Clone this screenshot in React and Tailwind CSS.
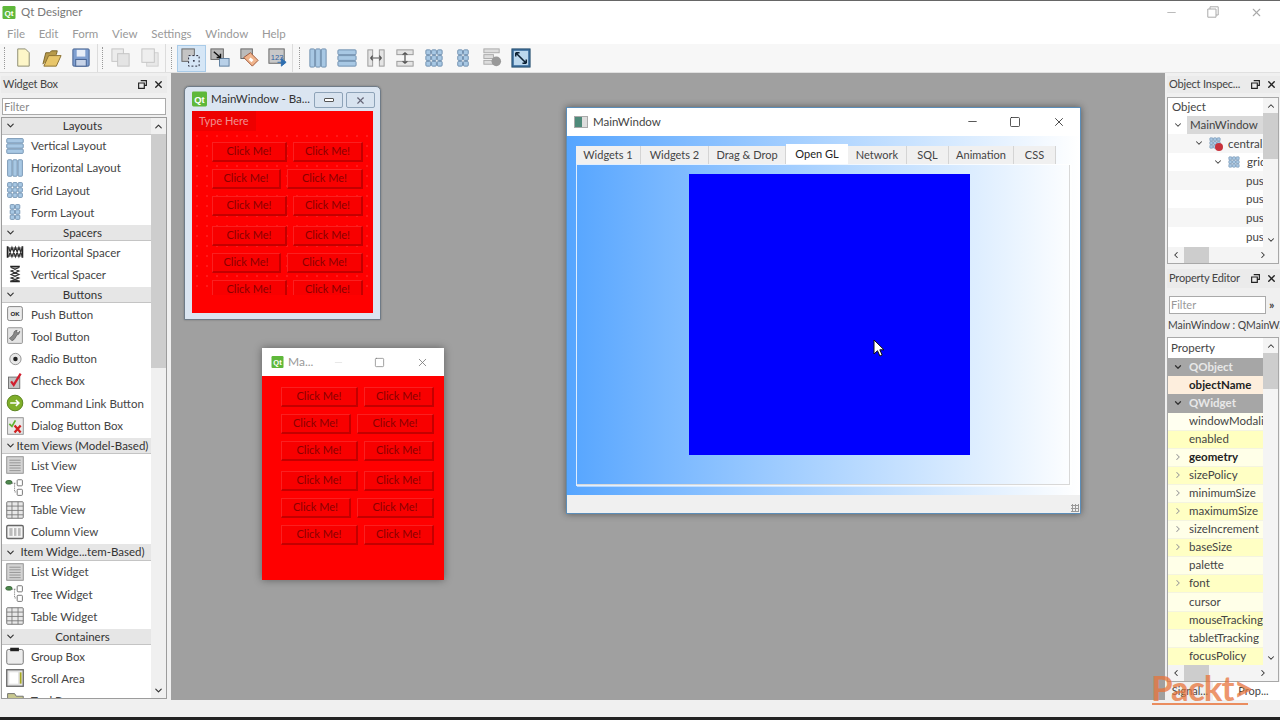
import React from "react";
import { ChevronDown, ChevronUp, ChevronLeft, ChevronRight, X, Minus, Square } from "lucide-react";

const FONT = { fontFamily: 'Lato, "Noto Sans", sans-serif' };

function QtLogo({ className = "w-4 h-4" }) {
  return (
    <svg viewBox="0 0 16 16" className={className}>
      <rect width="16" height="16" rx="1.5" fill="#5fb83a" />
      <text x="8" y="12" fontSize="10" fontWeight="700" textAnchor="middle" fill="#fff" fontFamily="Liberation Sans">Qt</text>
    </svg>
  );
}

// small drawings for the toolbar and the widget list
function Glyph({ name, className = "w-[22px] h-[22px]" }) {
  const blue = "#a8c8e4";
  const edge = "#6f8fae";
  let body = null;
  switch (name) {
    case "new":
      body = <path d="M6 2h8l4 4v14H6z" fill="#fdf6c8" stroke="#8a8a70" strokeWidth="1" />;
      break;
    case "open":
      body = (
        <>
          <path d="M2 18 5 6h4l2-2h6l-1 4" fill="#b79a4a" stroke="#7a6428" />
          <path d="M3 20 8 9h13l-5 11z" fill="#e8c66a" stroke="#8a7030" />
        </>
      );
      break;
    case "save":
      body = (
        <>
          <rect x="3" y="2" width="17" height="18" rx="1" fill="#7f9fd0" stroke="#44608f" />
          <rect x="7" y="3" width="9" height="7" fill="#e8eef8" />
          <rect x="6" y="13" width="11" height="7" fill="#c8d4e8" stroke="#44608f" />
        </>
      );
      break;
    case "copy":
      body = (
        <>
          <rect x="2" y="2" width="12" height="13" fill="#ececec" stroke="#c4c4c4" />
          <rect x="8" y="7" width="12" height="13" fill="#e4e4e4" stroke="#c4c4c4" />
        </>
      );
      break;
    case "paste":
      body = (
        <>
          <rect x="8" y="6" width="12" height="14" fill="#e8e8e8" stroke="#d0d0d0" />
          <rect x="3" y="2" width="13" height="14" fill="#eeeeee" stroke="#c4c4c4" />
        </>
      );
      break;
    case "select":
      body = (
        <>
          <rect x="2" y="2" width="13" height="13" fill="#c4c4c4" stroke="#666" />
          <rect x="9" y="9" width="11" height="11" fill="#d6e6f6" stroke="#223" strokeDasharray="2 2" />
          <circle cx="14.5" cy="14.5" r="1" fill="#223" />
        </>
      );
      break;
    case "signal":
      body = (
        <>
          <rect x="2" y="2" width="13" height="11" fill="#b8b8b8" stroke="#666" />
          <rect x="11" y="12" width="10" height="8" fill="#b8d0e8" stroke="#5f7f9f" />
          <path d="M5 5l7 6M12 7v4H8" stroke="#111" strokeWidth="1.5" fill="none" />
        </>
      );
      break;
    case "buddy":
      body = (
        <>
          <rect x="3" y="2" width="12" height="10" fill="#bbb" stroke="#666" />
          <path d="M6 11 13 6l8 8-6 6z" fill="#f0b48c" stroke="#a0583a" />
          <rect x="12" y="12" width="4" height="3" fill="#fff" transform="rotate(40 14 13)" />
        </>
      );
      break;
    case "tab":
      body = (
        <>
          <rect x="2" y="2" width="16" height="15" fill="#c8c8c8" stroke="#666" />
          <text x="4" y="14" fontSize="8" fill="#2f5fa0" fontFamily="Liberation Sans">123</text>
          <path d="M11 16h7M15 12l5 4-5 4z" stroke="#2f6fb0" fill="#2f6fb0" />
        </>
      );
      break;
    case "hlayout":
      body = (
        <>
          <rect x="3" y="2" width="5" height="19" rx="1" fill={blue} stroke={edge} />
          <rect x="9" y="2" width="5" height="19" rx="1" fill={blue} stroke={edge} />
          <rect x="15" y="2" width="5" height="19" rx="1" fill={blue} stroke={edge} />
        </>
      );
      break;
    case "vlayout":
      body = (
        <>
          <rect x="2" y="3" width="19" height="5" rx="1" fill={blue} stroke={edge} />
          <rect x="2" y="9" width="19" height="5" rx="1" fill={blue} stroke={edge} />
          <rect x="2" y="15" width="19" height="5" rx="1" fill={blue} stroke={edge} />
        </>
      );
      break;
    case "hsplit":
      body = (
        <>
          <rect x="3" y="3" width="5" height="17" fill="#e4e4e4" stroke="#999" />
          <rect x="15" y="3" width="5" height="17" fill="#e4e4e4" stroke="#999" />
          <path d="M7 11.5h9M8 9l-2 2.5L8 14M15 9l2 2.5-2 2.5" stroke="#555" strokeWidth="1.3" fill="none" />
        </>
      );
      break;
    case "vsplit":
      body = (
        <>
          <rect x="3" y="3" width="17" height="5" fill="#e4e4e4" stroke="#999" />
          <rect x="3" y="15" width="17" height="5" fill="#e4e4e4" stroke="#999" />
          <path d="M11.5 7v9M9 8l2.5-2L14 8M9 15l2.5 2 2.5-2" stroke="#555" strokeWidth="1.3" fill="none" />
        </>
      );
      break;
    case "grid":
      body = (
        <>
          {[3, 9, 15].map((y) =>
            [3, 9, 15].map((x) => <rect key={x + "-" + y} x={x} y={y} width="5" height="5" rx="1" fill={blue} stroke={edge} />)
          )}
        </>
      );
      break;
    case "form":
      body = (
        <>
          {[3, 9, 15].map((y) =>
            [6, 12].map((x) => <rect key={x + "-" + y} x={x} y={y} width="5" height="5" rx="1" fill={blue} stroke={edge} />)
          )}
        </>
      );
      break;
    case "breaklayout":
      body = (
        <>
          <rect x="3" y="2" width="16" height="4" fill="#ddd" stroke="#aaa" />
          <rect x="3" y="8" width="10" height="4" fill="#ddd" stroke="#aaa" />
          <rect x="3" y="14" width="9" height="4" fill="#ddd" stroke="#aaa" />
          <circle cx="16" cy="15" r="5" fill="#999" />
        </>
      );
      break;
    case "adjust":
      body = (
        <>
          <rect x="2" y="2" width="19" height="19" fill="#3d6f9f" stroke="#27506f" />
          <rect x="4" y="4" width="15" height="15" fill="#bcd8ee" />
          <path d="M6 6l11 11M6 6h4M6 6v4M17 17h-4M17 17v-4" stroke="#0d2235" strokeWidth="1.6" fill="none" />
        </>
      );
      break;
    case "hspacer":
      body = (
        <>
          <path d="M3 5v13M20 5v13" stroke="#222" strokeWidth="2" />
          <path d="M4 6l4 11 4-11 4 11 4-11M4 17l4-11 4 11 4-11 4 11" stroke="#333" strokeWidth="1.4" fill="#999" />
        </>
      );
      break;
    case "vspacer":
      body = (
        <>
          <path d="M6 3h11M6 20h11" stroke="#222" strokeWidth="2" />
          <path d="M7 4l9 4-9 4 9 4-9 4M16 4 7 8l9 4-9 4 9 4" stroke="#333" strokeWidth="1.4" fill="none" />
        </>
      );
      break;
    case "ok":
      body = (
        <>
          <rect x="3" y="3" width="17" height="16" rx="2" fill="#ececec" stroke="#777" />
          <text x="11.5" y="14" fontSize="7" fontWeight="700" textAnchor="middle" fill="#222" fontFamily="Liberation Sans">OK</text>
        </>
      );
      break;
    case "tool":
      body = (
        <>
          <rect x="3" y="2" width="17" height="18" rx="1" fill="#e4e4e4" stroke="#888" />
          <path d="M8 17c3-1 4-4 6-7 2 0 3-2 3-4l-2 2-2-1 1-2c-3 0-4 2-4 4-1 2-3 4-5 5z" fill="#888" stroke="#444" strokeWidth=".6" />
        </>
      );
      break;
    case "radio":
      body = (
        <>
          <circle cx="12" cy="11.5" r="6.5" fill="#e8e8e8" stroke="#888" />
          <circle cx="12" cy="11.5" r="2.6" fill="#222" />
        </>
      );
      break;
    case "check":
      body = (
        <>
          <rect x="4" y="7" width="13" height="13" fill="#c4c4c4" stroke="#666" />
          <path d="M7 12l3 4 8-13" stroke="#d01f2f" strokeWidth="2.6" fill="none" />
        </>
      );
      break;
    case "command":
      body = (
        <>
          <circle cx="11.5" cy="11.5" r="9" fill="#7fae2a" stroke="#4f7a10" />
          <path d="M6 11.5h10M12.5 8l3.5 3.5-3.5 3.5" stroke="#fff" strokeWidth="1.8" fill="none" />
        </>
      );
      break;
    case "dialog":
      body = (
        <>
          <rect x="3" y="2" width="18" height="19" fill="#e8e8e8" stroke="#888" />
          <path d="M5 9l3 3 4-7" stroke="#60b030" strokeWidth="2" fill="none" />
          <path d="M11 11l7 8M18 11l-7 8" stroke="#d02020" strokeWidth="2.6" />
        </>
      );
      break;
    case "list":
      body = (
        <>
          <rect x="2" y="2" width="19" height="19" fill="#d4d4d4" stroke="#888" />
          <path d="M5 6h13M5 9h13M5 12h13M5 15h13M5 18h13" stroke="#8c8c8c" />
        </>
      );
      break;
    case "tree":
      body = (
        <>
          <rect x="1" y="3" width="7" height="4" rx="2" fill="#4f8a4f" stroke="#2f5f2f" />
          <path d="M8 6h5M11 6v10h2" stroke="#777" strokeDasharray="1.5 1" fill="none" />
          <rect x="14" y="2" width="6" height="7" rx="1" fill="#fff" stroke="#666" />
          <rect x="14" y="13" width="6" height="7" rx="1" fill="#fff" stroke="#666" />
        </>
      );
      break;
    case "table":
      body = (
        <>
          <rect x="2" y="2" width="19" height="19" rx="1" fill="#e8e8e8" stroke="#666" />
          <path d="M2 7h19M2 12h19M2 17h19M8 2v19M15 2v19" stroke="#777" />
        </>
      );
      break;
    case "column":
      body = (
        <>
          <rect x="2" y="4" width="19" height="15" rx="1.5" fill="#f4f4f4" stroke="#666" strokeWidth="1.5" />
          <path d="M5 7h13v9H5z" fill="#bbb" />
          <path d="M9.5 7v9M14 7v9" stroke="#fff" strokeWidth="1.5" />
        </>
      );
      break;
    case "group":
      body = (
        <>
          <rect x="2" y="4" width="19" height="17" rx="2" fill="#ececec" stroke="#666" />
          <rect x="6" y="2" width="10" height="4" fill="#222" />
        </>
      );
      break;
    case "scroll":
      body = (
        <>
          <rect x="2" y="2" width="19" height="19" fill="#e4e4e4" stroke="#666" strokeWidth="1.5" />
          <rect x="5" y="5" width="10" height="13" fill="#fff" />
          <rect x="17" y="5" width="2" height="13" fill="#a8a820" />
        </>
      );
      break;
    case "toolbox":
      body = <path d="M3 3h8l2 3h8v15H3z" fill="#c8c890" stroke="#666" />;
      break;
    default:
      break;
  }
  return (
    <svg viewBox="0 0 23 23" className={className}>
      {body}
    </svg>
  );
}

function FloatIcon() {
  return (
    <svg viewBox="0 0 10 10" className="w-[9px] h-[9px]">
      <path d="M3 .7h6.3V6H7M.7 3.3H7v6H.7z" fill="none" stroke="#222" strokeWidth="1.3" />
    </svg>
  );
}

function RestoreIcon() {
  return (
    <svg viewBox="0 0 12 12" className="w-[12px] h-[12px]">
      <path d="M3 3V.8h8.2V9H9M.8 3H9v8.2H.8z" fill="none" stroke="#aaa" strokeWidth="1" />
    </svg>
  );
}

function DockTitle({ title, className = "" }) {
  return (
    <div className={"flex items-center justify-between bg-[#ebebeb] pl-[2px] pr-[3px] text-[11px] tracking-[-0.2px] text-[#444] whitespace-nowrap " + className}>
      <span>{title}</span>
      <span className="flex items-center gap-[6px]">
        <FloatIcon />
        <X className="w-[11px] h-[11px] text-[#222]" strokeWidth={3} />
      </span>
    </div>
  );
}

const widgetGroups = [
  { title: "Layouts", items: [["Vertical Layout", "vlayout"], ["Horizontal Layout", "hlayout"], ["Grid Layout", "grid"], ["Form Layout", "form"]] },
  { title: "Spacers", items: [["Horizontal Spacer", "hspacer"], ["Vertical Spacer", "vspacer"]] },
  {
    title: "Buttons",
    items: [["Push Button", "ok"], ["Tool Button", "tool"], ["Radio Button", "radio"], ["Check Box", "check"], ["Command Link Button", "command"], ["Dialog Button Box", "dialog"]],
  },
  { title: "Item Views (Model-Based)", items: [["List View", "list"], ["Tree View", "tree"], ["Table View", "table"], ["Column View", "column"]] },
  { title: "Item Widge...tem-Based)", items: [["List Widget", "list"], ["Tree Widget", "tree"], ["Table Widget", "table"]] },
  { title: "Containers", items: [["Group Box", "group"], ["Scroll Area", "scroll"], ["Tool Box", "toolbox"]] },
];

function WidgetBox() {
  return (
    <aside className="w-[171px] shrink-0 flex flex-col bg-[#f0f0f0] pl-[1px] pr-[4px] pt-[3px] pb-[1px]">
      <DockTitle title="Widget Box" className="h-[17px]" />
      <div className="h-[17px] mt-[5px] mx-[1px] border border-[#aaa] bg-white text-[11px] leading-[15px] pl-[1px] text-[#888]">Filter</div>
      <div className="mt-[2px] flex-1 min-h-0 border border-[#9c9c9c] bg-white flex overflow-hidden">
        <div className="flex-1 min-w-0 overflow-hidden -mt-[1px]">
          {widgetGroups.map((group) => (
            <div key={group.title}>
              <div className="h-[17.5px] flex items-center bg-[#e6e6e6] border-b border-[#c4c4c4] border-t border-t-white text-[11.5px] text-[#333]">
                <ChevronDown className="w-[11px] h-[11px] ml-[3px] shrink-0 text-[#333]" strokeWidth={2.5} />
                <span className="flex-1 text-center whitespace-nowrap pr-[2px]">{group.title}</span>
              </div>
              {group.items.map(([label, icon]) => (
                <div key={label} className="h-[22.27px] flex items-center text-[11.5px] text-[#444] whitespace-nowrap">
                  <span className="w-[29px] flex justify-center pr-[4px] shrink-0">
                    <Glyph name={icon} className="w-[20px] h-[20px]" />
                  </span>
                  {label}
                </div>
              ))}
            </div>
          ))}
        </div>
        <div className="w-[15px] shrink-0 flex flex-col bg-[#f0f0f0]">
          <div className="h-[16px] flex items-center justify-center">
            <ChevronUp className="w-[11px] h-[11px] text-[#333]" strokeWidth={2.5} />
          </div>
          <div className="h-[234px] bg-[#cdcdcd]" />
          <div className="flex-1" />
          <div className="h-[16px] flex items-center justify-center">
            <ChevronDown className="w-[11px] h-[11px] text-[#333]" strokeWidth={2.5} />
          </div>
        </div>
      </div>
    </aside>
  );
}

function ClickButton({ w }) {
  return (
    <div
      style={{ width: w }}
      className="h-[20px] shrink-0 flex items-center justify-center bg-[#f80000] border-t border-l border-[#fa2020] border-b-2 border-r-2 border-b-[#c40000] border-r-[#c40000] text-[11px] text-[#8a0000]"
    >
      Click Me!
    </div>
  );
}

function ButtonGrid({ first, second, third }) {
  return (
    <div className="flex flex-col gap-[7px]">
      {[first, second, third].map((row, i) => (
        <div key={i} className="flex gap-[6px]">
          <ClickButton w={row[0]} />
          <ClickButton w={row[1]} />
        </div>
      ))}
    </div>
  );
}

function FormWindow() {
  return (
    <div className="absolute left-[13px] top-[13px] w-[197px] h-[234px] rounded-t-[5px] border border-[#6f7b87] bg-[#dbe5f1] shadow-[0_0_2px_rgba(0,0,0,0.3)] flex flex-col px-[7px]">
      <div className="h-[24px] shrink-0 flex items-center text-[11.5px] text-[#333] relative whitespace-nowrap">
        <QtLogo className="w-[15px] h-[16px] mr-[4px]" />
        MainWindow - Ba...
        <div className="absolute right-[-2px] top-[5px] flex gap-[3px]">
          <div className="w-[29px] h-[16px] rounded-[2px] border border-[#8ea3b8] bg-[#d8e3ef] flex items-center justify-center">
            <div className="w-[10px] h-[4px] border border-[#555] bg-white rounded-[1px]" />
          </div>
          <div className="w-[29px] h-[16px] rounded-[2px] border border-[#8ea3b8] bg-[#d8e3ef] flex items-center justify-center">
            <X className="w-[11px] h-[11px] text-[#667]" strokeWidth={2.5} />
          </div>
        </div>
      </div>
      <div className="h-[202px] bg-[#ff0000] flex flex-col overflow-hidden">
        <div className="h-[20px] shrink-0 flex">
          <span className="px-[7px] bg-[#ee0000] text-[11px] leading-[20px] text-[#f09090]">Type Here</span>
        </div>
        <div className="pl-[20px] pt-[11px] h-[164px] overflow-hidden flex flex-col gap-[10px] bg-[radial-gradient(rgba(255,255,255,0.22)_0.6px,transparent_0.8px)] bg-[length:10px_10px]">
          <ButtonGrid first={[75, 70]} second={[69, 76]} third={[75, 70]} />
          <ButtonGrid first={[75, 70]} second={[69, 76]} third={[75, 70]} />
        </div>
      </div>
    </div>
  );
}

function PreviewWindow() {
  return (
    <div className="absolute left-[91px] top-[275px] w-[182px] h-[232px] shadow-[0_0_8px_rgba(0,0,0,0.4)] flex flex-col">
      <div className="h-[28px] shrink-0 bg-white flex items-center pl-[9px] text-[12px] text-[#999]">
        <QtLogo className="w-[13px] h-[12px] mr-[4px]" />
        <span>Ma...</span>
        <div className="ml-auto flex items-center">
          <Minus className="w-[11px] h-[11px] text-[#e6e6e6] mr-[30px]" />
          <Square className="w-[11px] h-[11px] text-[#777] mr-[31px]" strokeWidth={1.5} />
          <X className="w-[13px] h-[13px] text-[#777] mr-[15px]" strokeWidth={1.5} />
        </div>
      </div>
      <div className="flex-1 bg-[#ff0000] pl-[19px] pt-[11px] flex flex-col gap-[10px]">
        <ButtonGrid first={[77, 70]} second={[70, 77]} third={[77, 70]} />
        <ButtonGrid first={[77, 70]} second={[70, 77]} third={[77, 70]} />
      </div>
    </div>
  );
}

const mainTabs = [
  ["Widgets 1", "w-[65px]"],
  ["Widgets 2", "w-[68px]"],
  ["Drag & Drop", "w-[77px]"],
  ["Open GL", "w-[62px]"],
  ["Network", "w-[59px]"],
  ["SQL", "w-[42px]"],
  ["Animation", "w-[65px]"],
  ["CSS", "w-[42px]"],
];

function MainWindow() {
  return (
    <div className="absolute left-[395px] top-[34px] w-[515px] h-[407px] border border-[#5b8db8] shadow-[0_0_7px_rgba(0,0,0,0.45)] flex flex-col bg-white">
      <div className="h-[28px] shrink-0 bg-white flex items-center pl-[7px] pb-[1px] text-[11.5px] text-[#444]">
        <span className="w-[14px] h-[12px] mr-[5px] border border-[#aaa] bg-[#ddd] flex">
          <span className="w-[7px] bg-[#4f8a7a]" />
        </span>
        MainWindow
        <div className="ml-auto flex items-center">
          <Minus className="w-[13px] h-[13px] text-[#333] mr-[30px]" strokeWidth={1.5} />
          <Square className="w-[12px] h-[12px] text-[#222] mr-[31px]" strokeWidth={1.5} />
          <X className="w-[14px] h-[14px] text-[#333] mr-[14px]" strokeWidth={1.5} />
        </div>
      </div>
      <div className="flex-1 min-h-0 bg-gradient-to-r from-[#55a5ff] to-[#ffffff] px-[9px] pt-[8px] pb-[9px] flex flex-col">
        <div className="flex items-end h-[20px] shrink-0">
          {mainTabs.map(([label, w]) => {
            const active = label === "Open GL";
            return (
              <div
                key={label}
                className={
                  active
                    ? w + " h-[20px] bg-white flex items-center justify-center text-[11px] text-[#222]"
                    : w + " h-[18px] bg-[#f0f0f0] border-r border-[#d4d4d4] flex items-center justify-center text-[11px] text-[#444]"
                }
              >
                {label}
              </div>
            );
          })}
        </div>
        <div className="flex-1 border border-white/80 pl-[112px] pt-[9px] shadow-[inset_-1px_-1px_0_#d8d8d8,1px_1px_0_rgba(255,255,255,0.5)]">
          <div className="w-[281px] h-[281px] bg-[#0000ff]" />
        </div>
      </div>
      <div className="h-[18px] shrink-0 bg-[#f0f0f0] relative">
        <span className="absolute right-[1px] bottom-[1px] w-[8px] h-[8px] bg-[radial-gradient(#999_1px,transparent_1.2px)] bg-[length:3px_3px]" />
      </div>
    </div>
  );
}

const inspectorRows = [
  { label: "central", indent: "pl-[26px]", icon: "central", bg: "bg-[#f6f6f6]" },
  { label: "grid", indent: "pl-[45px]", icon: "grid", bg: "bg-white" },
  { label: "pus", indent: "pl-[78px]", bg: "bg-[#f6f6f6]" },
  { label: "pus", indent: "pl-[78px]", bg: "bg-white" },
  { label: "pus", indent: "pl-[78px]", bg: "bg-[#f6f6f6]" },
  { label: "pus", indent: "pl-[78px]", bg: "bg-white" },
];

const propertyRows = [
  { label: "QObject", kind: "group" },
  { label: "objectName", kind: "name" },
  { label: "QWidget", kind: "group", tall: true },
  { label: "windowModali", bg: "bg-[#fffff0]" },
  { label: "enabled", bg: "bg-[#ffffc0]" },
  { label: "geometry", arrow: true, bold: true, bg: "bg-[#ffffe8]" },
  { label: "sizePolicy", arrow: true, bg: "bg-[#ffffc4]" },
  { label: "minimumSize", arrow: true, bg: "bg-[#ffffe8]" },
  { label: "maximumSize", arrow: true, bg: "bg-[#ffffc4]" },
  { label: "sizeIncrement", arrow: true, bg: "bg-[#ffffe8]" },
  { label: "baseSize", arrow: true, bg: "bg-[#ffffc4]" },
  { label: "palette", bg: "bg-[#ffffe8]" },
  { label: "font", arrow: true, bg: "bg-[#ffffc4]" },
  { label: "cursor", bg: "bg-[#ffffe8]", tall: true },
  { label: "mouseTracking", bg: "bg-[#ffffc4]" },
  { label: "tabletTracking", bg: "bg-[#ffffe8]" },
  { label: "focusPolicy", bg: "bg-[#ffffc4]" },
];

function VScrollBar({ thumb }) {
  return (
    <div className="w-[15px] shrink-0 flex flex-col bg-[#f4f4f4]">
      <div className="h-[15px] flex items-center justify-center">
        <ChevronUp className="w-[10px] h-[10px] text-[#333]" strokeWidth={2.5} />
      </div>
      <div className={thumb + " bg-[#cdcdcd]"} />
      <div className="flex-1" />
      <div className="h-[15px] flex items-center justify-center">
        <ChevronDown className="w-[10px] h-[10px] text-[#333]" strokeWidth={2.5} />
      </div>
    </div>
  );
}

function HScrollBar() {
  return (
    <div className="h-[16px] shrink-0 flex items-center bg-[#f4f4f4]">
      <div className="w-[16px] flex justify-center">
        <ChevronLeft className="w-[10px] h-[10px] text-[#333]" strokeWidth={2.5} />
      </div>
      <div className="w-[25px] h-full bg-[#cdcdcd]" />
      <div className="flex-1" />
      <div className="w-[30px] flex justify-center">
        <ChevronRight className="w-[10px] h-[10px] text-[#333]" strokeWidth={2.5} />
      </div>
    </div>
  );
}

function RightDock() {
  return (
    <aside className="w-[115px] shrink-0 flex flex-col bg-[#f0f0f0] pl-[2px] pt-[3px] text-[11.5px]">
      <DockTitle title="Object Inspec..." className="h-[17px]" />
      <div className="mt-[4px] h-[167px] mr-[1px] border border-[#a8a8a8] bg-white flex flex-col overflow-hidden">
        <div className="flex-1 min-h-0 flex">
          <div className="flex-1 min-w-0 overflow-hidden text-[#444] whitespace-nowrap">
            <div className="h-[18px] leading-[18px] pl-[4px]">Object</div>
            <div className="h-[18px] flex items-center pl-[5px]">
              <ChevronDown className="w-[10px] h-[10px] mr-[4px] shrink-0" strokeWidth={2.5} />
              <span className="bg-[#d9d9d9] pl-[3px] pr-[4px] flex-1 leading-[18px]">MainWindow</span>
            </div>
            {inspectorRows.map((row, i) => (
              <div key={i} className={"h-[18.6px] flex items-center " + row.indent + " " + row.bg}>
                {row.icon && <ChevronDown className="w-[10px] h-[10px] mr-[4px] shrink-0" strokeWidth={2.5} />}
                {row.icon === "grid" && <Glyph name="grid" className="w-[14px] h-[14px] mr-[6px] shrink-0" />}
                {row.icon === "central" && (
                  <span className="relative w-[15px] h-[15px] mr-[5px] shrink-0">
                    <Glyph name="grid" className="w-[14px] h-[14px]" />
                    <span className="absolute right-0 bottom-0 w-[8px] h-[8px] rounded-full bg-[#c8323c]" />
                  </span>
                )}
                {row.label}
              </div>
            ))}
          </div>
          <VScrollBar thumb="h-[46px]" />
        </div>
        <HScrollBar />
      </div>
      <DockTitle title="Property Editor" className="h-[19px] mt-[5px]" />
      <div className="mt-[8px] ml-[2px] flex items-center">
        <div className="w-[97px] h-[18px] border border-[#aaa] bg-white text-[11px] leading-[16px] pl-[1px] text-[#999]">Filter</div>
        <span className="ml-[3px] text-[12px] font-bold leading-none text-[#444]">»</span>
      </div>
      <div className="h-[23px] flex items-center text-[10.5px] text-[#444] whitespace-nowrap overflow-hidden pl-[1px]">MainWindow : QMainW...</div>
      <div className="h-[345px] mr-[1px] border border-[#a8a8a8] bg-white flex flex-col overflow-hidden">
        <div className="flex-1 min-h-0 flex">
          <div className="flex-1 min-w-0 overflow-hidden whitespace-nowrap text-[#444]">
            <div className="h-[19.5px] leading-[19px] pl-[3px]">Property</div>
            {propertyRows.map((row) => {
              if (row.kind === "group") {
                return (
                  <div key={row.label} className={(row.tall ? "h-[19px] " : "h-[18px] ") + "flex items-center bg-[#a6a6a6] text-[#e8e8e8] font-bold pl-[5px]"}>
                    <ChevronDown className="w-[10px] h-[10px] mr-[6px] text-[#333]" strokeWidth={3} />
                    {row.label}
                  </div>
                );
              }
              if (row.kind === "name") {
                return (
                  <div key={row.label} className="h-[18px] leading-[18px] bg-[#fdeedd] font-bold text-[#222] pl-[21px]">
                    {row.label}
                  </div>
                );
              }
              return (
                <div
                  key={row.label}
                  className={(row.tall ? "h-[19px] " : "h-[18px] ") + "flex items-center border-b border-[#f4f4e0] pl-[5px] " + row.bg + (row.bold ? " font-bold text-[#222]" : "")}
                >
                  <span className="w-[16px] shrink-0">
                    {row.arrow && <ChevronRight className="w-[10px] h-[10px] text-[#999]" strokeWidth={2.5} />}
                  </span>
                  {row.label}
                </div>
              );
            })}
          </div>
          <VScrollBar thumb="h-[36px]" />
        </div>
        <HScrollBar />
      </div>
      <div className="flex-1 flex text-[11px] text-[#444]">
        <div className="w-[46px] bg-[#f0f0f0] text-center leading-[18px]">Signal...</div>
        <div className="flex-1 bg-white text-center leading-[18px] pl-[14px]">Prop...</div>
      </div>
    </aside>
  );
}

const toolbarGroups = [
  { pad: "w-[94px]", handle: "mr-[3px]", items: ["new", "open", "save"] },
  { pad: "w-[68px]", handle: "ml-[4px] mr-[3px]", items: ["copy", "paste"] },
  { pad: "w-[127px]", handle: "ml-[5px] mr-[5px]", items: ["select", "signal", "buddy", "tab"] },
  { pad: "", handle: "ml-[6px] mr-[3px]", items: ["hlayout", "vlayout", "hsplit", "vsplit", "grid", "form", "breaklayout", "adjust"] },
];

export default function App() {
  return (
    <div style={FONT} className="relative w-[1280px] h-[720px] overflow-hidden flex flex-col bg-[#f0f0f0]">
      <div className="h-[1px] shrink-0 bg-[#666]" />
      <header className="h-[22px] shrink-0 bg-white flex items-center pl-[2px] text-[11.5px] text-[#777]">
        <QtLogo className="w-[14px] h-[13px] mr-[5px]" />
        Qt Designer
        <div className="ml-auto flex items-center">
          <Minus className="w-[13px] h-[13px] text-[#bbb] mr-[29px]" />
          <RestoreIcon />
          <X className="w-[13px] h-[13px] text-[#aaa] ml-[31px] mr-[17px]" />
        </div>
      </header>
      <nav className="h-[21px] shrink-0 bg-white flex items-center pl-[7px] gap-[13.7px] text-[11.5px] text-[#999]">
        {["File", "Edit", "Form", "View", "Settings", "Window", "Help"].map((m) => (
          <span key={m}>{m}</span>
        ))}
      </nav>
      <div className="h-[29px] shrink-0 bg-[#f7f7f7] flex items-center pl-[4px] border-b border-[#e0e0e0]">
        {toolbarGroups.map((group, g) => (
          <div key={g} className={"flex items-center h-full " + group.pad + (g < 3 ? " border-r border-[#dcdcdc]" : "")}>
            <span className={"w-[1px] h-[22px] border-l border-dotted border-[#999] " + group.handle} />
            {group.items.map((name) => (
              <span key={name} className={name === "select" ? "w-[29px] h-[27px] bg-[#d5e6f6] border border-[#a9cbe8] flex items-center justify-center" : "w-[29px] h-[27px] flex items-center justify-center"}>
                <Glyph name={name} />
              </span>
            ))}
          </div>
        ))}
      </div>
      <main className="flex-1 min-h-0 flex">
        <WidgetBox />
        <section className="relative flex-1 min-w-0 bg-[#a0a0a0]">
          <FormWindow />
          <PreviewWindow />
          <MainWindow />
        </section>
        <RightDock />
      </main>
      <div className="h-[17px] shrink-0 bg-[#f0f0f0]" />
      <div className="h-[3px] shrink-0 bg-[#222]" />

      {/* mouse pointer */}
      <svg viewBox="0 0 12 18" className="absolute left-[873px] top-[339px] w-[12px] h-[18px]">
        <path d="M1 1v14l3.5-3.3 2.4 5.3 2.3-1-2.4-5.2H11z" fill="#fff" stroke="#111" strokeWidth="1" />
      </svg>

      {/* watermark */}
      <div className="absolute left-[1151px] top-[665px] text-[35px] leading-[44px] font-bold text-[#e8743b] opacity-75 tracking-[-1px] pointer-events-none">
        Packt&gt;
      </div>
      <div className="absolute left-[1152px] top-[703px] w-[96px] h-[2px] bg-[#e8743b]/80" />
    </div>
  );
}
